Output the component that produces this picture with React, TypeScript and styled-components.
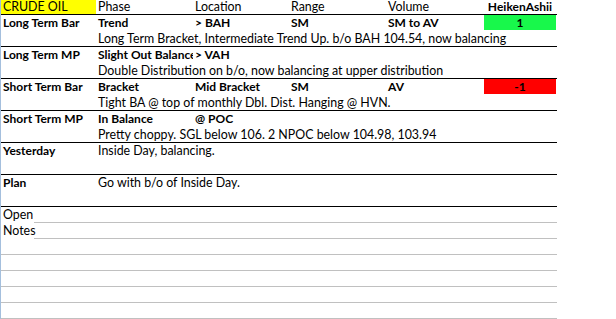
import React from "react";
import styled, { createGlobalStyle } from "styled-components";

const GlobalStyle = createGlobalStyle`
  html, body {
    margin: 0;
    padding: 0;
    background: #fff;
  }

  body {
    font-family: Lato, "Liberation Sans", sans-serif;
    font-size: 12.4px;
    color: #000;
  }
`;

const COLUMNS = "95px 97px 96px 97px 97px 74px";

type Row = {
  label: string;
  phase: string;
  location?: string;
  range?: string;
  volume?: string;
  signal?: number;
  note?: string;
};

const rows: Row[] = [
  {
    label: "Long Term Bar",
    phase: "Trend",
    location: "> BAH",
    range: "SM",
    volume: "SM to AV",
    signal: 1,
    note: "Long Term Bracket, Intermediate Trend Up. b/o BAH 104.54, now balancing",
  },
  {
    label: "Long Term MP",
    phase: "Slight Out Balance",
    location: "> VAH",
    note: "Double Distribution on b/o, now balancing at upper distribution",
  },
  {
    label: "Short Term Bar",
    phase: "Bracket",
    location: "Mid Bracket",
    range: "SM",
    volume: "AV",
    signal: -1,
    note: "Tight BA @ top of monthly Dbl. Dist. Hanging @ HVN.",
  },
  {
    label: "Short Term MP",
    phase: "In Balance",
    location: "@ POC",
    note: "Pretty choppy. SGL below 106. 2 NPOC below 104.98, 103.94",
  },
];

const Sheet = styled.div`
  width: 556px;
  height: 319px;
  border-left: 1px solid #a4bfdd;
  overflow: hidden;
`;

const HeadRow = styled.div`
  display: grid;
  grid-template-columns: ${COLUMNS};
  height: 15px;
  border-bottom: 1px solid #000;
  box-sizing: border-box;
`;

const GridRow = styled.div<{ $closed?: boolean }>`
  display: grid;
  grid-template-columns: ${COLUMNS};
  height: 16px;
  box-sizing: border-box;
  border-bottom: 1px solid ${(p) => (p.$closed ? "#000" : "transparent")};
`;

const Cell = styled.div<{ $bold?: boolean; $fill?: string; $center?: boolean; $clip?: boolean }>`
  padding: 0 2px;
  line-height: 15px;
  white-space: nowrap;
  font-size: ${(p) => (p.$bold ? "12px" : "inherit")};
  font-weight: ${(p) => (p.$bold ? 700 : 400)};
  background: ${(p) => p.$fill ?? "transparent"};
  text-align: ${(p) => (p.$center ? "center" : "left")};
  overflow: ${(p) => (p.$clip ? "hidden" : "visible")};
`;

const HeadCell = styled(Cell)`
  line-height: 14px;
`;

const Flag = styled.div<{ $up: boolean }>`
  margin-left: 1px;
  width: 72px;
  line-height: 15px;
  font-size: 12px;
  text-align: center;
  font-weight: 700;
  color: #000;
  background: ${(p) => (p.$up ? "#18f84b" : "#ff0000")};
`;

const NoteCell = styled.div`
  grid-column: 2 / -1;
  padding: 0 2px;
  line-height: 15px;
  white-space: nowrap;
`;

const LinedRow = styled.div`
  display: grid;
  grid-template-columns: 33px 1fr;
  height: 16px;
`;

const LinedLabel = styled.div`
  padding: 0 2px;
  line-height: 15px;
`;

const Line = styled.div`
  border-bottom: 1px solid #c0c0c0;
`;

const BlankRow = styled.div`
  height: 16px;
  box-sizing: border-box;
  border-bottom: 1px solid #c0c0c0;
`;

export default function App() {
  return (
    <>
      <GlobalStyle />
      <Sheet>
        <HeadRow>
          <HeadCell $fill="#ffff00">CRUDE OIL</HeadCell>
          <HeadCell>Phase</HeadCell>
          <HeadCell>Location</HeadCell>
          <HeadCell>Range</HeadCell>
          <HeadCell>Volume</HeadCell>
          <HeadCell $bold $center>
            HeikenAshii
          </HeadCell>
        </HeadRow>

        {rows.map((r) => (
          <React.Fragment key={r.label}>
            <GridRow>
              <Cell $bold>{r.label}</Cell>
              <Cell $bold $clip>
                {r.phase}
              </Cell>
              <Cell $bold>{r.location}</Cell>
              <Cell $bold>{r.range}</Cell>
              <Cell $bold>{r.volume}</Cell>
              {r.signal !== undefined ? <Flag $up={r.signal > 0}>{r.signal}</Flag> : <Cell />}
            </GridRow>
            <GridRow $closed>
              <Cell />
              <NoteCell>{r.note}</NoteCell>
            </GridRow>
          </React.Fragment>
        ))}

        <GridRow>
          <Cell $bold>Yesterday</Cell>
          <NoteCell>Inside Day, balancing.</NoteCell>
        </GridRow>
        <GridRow $closed />
        <GridRow>
          <Cell $bold>Plan</Cell>
          <NoteCell>Go with b/o of Inside Day.</NoteCell>
        </GridRow>
        <GridRow $closed />

        <LinedRow>
          <LinedLabel>Open</LinedLabel>
          <Line />
        </LinedRow>
        <LinedRow>
          <LinedLabel>Notes</LinedLabel>
          <Line />
        </LinedRow>
        {[0, 1, 2, 3, 4].map((i) => (
          <BlankRow key={i} />
        ))}
      </Sheet>
    </>
  );
}
